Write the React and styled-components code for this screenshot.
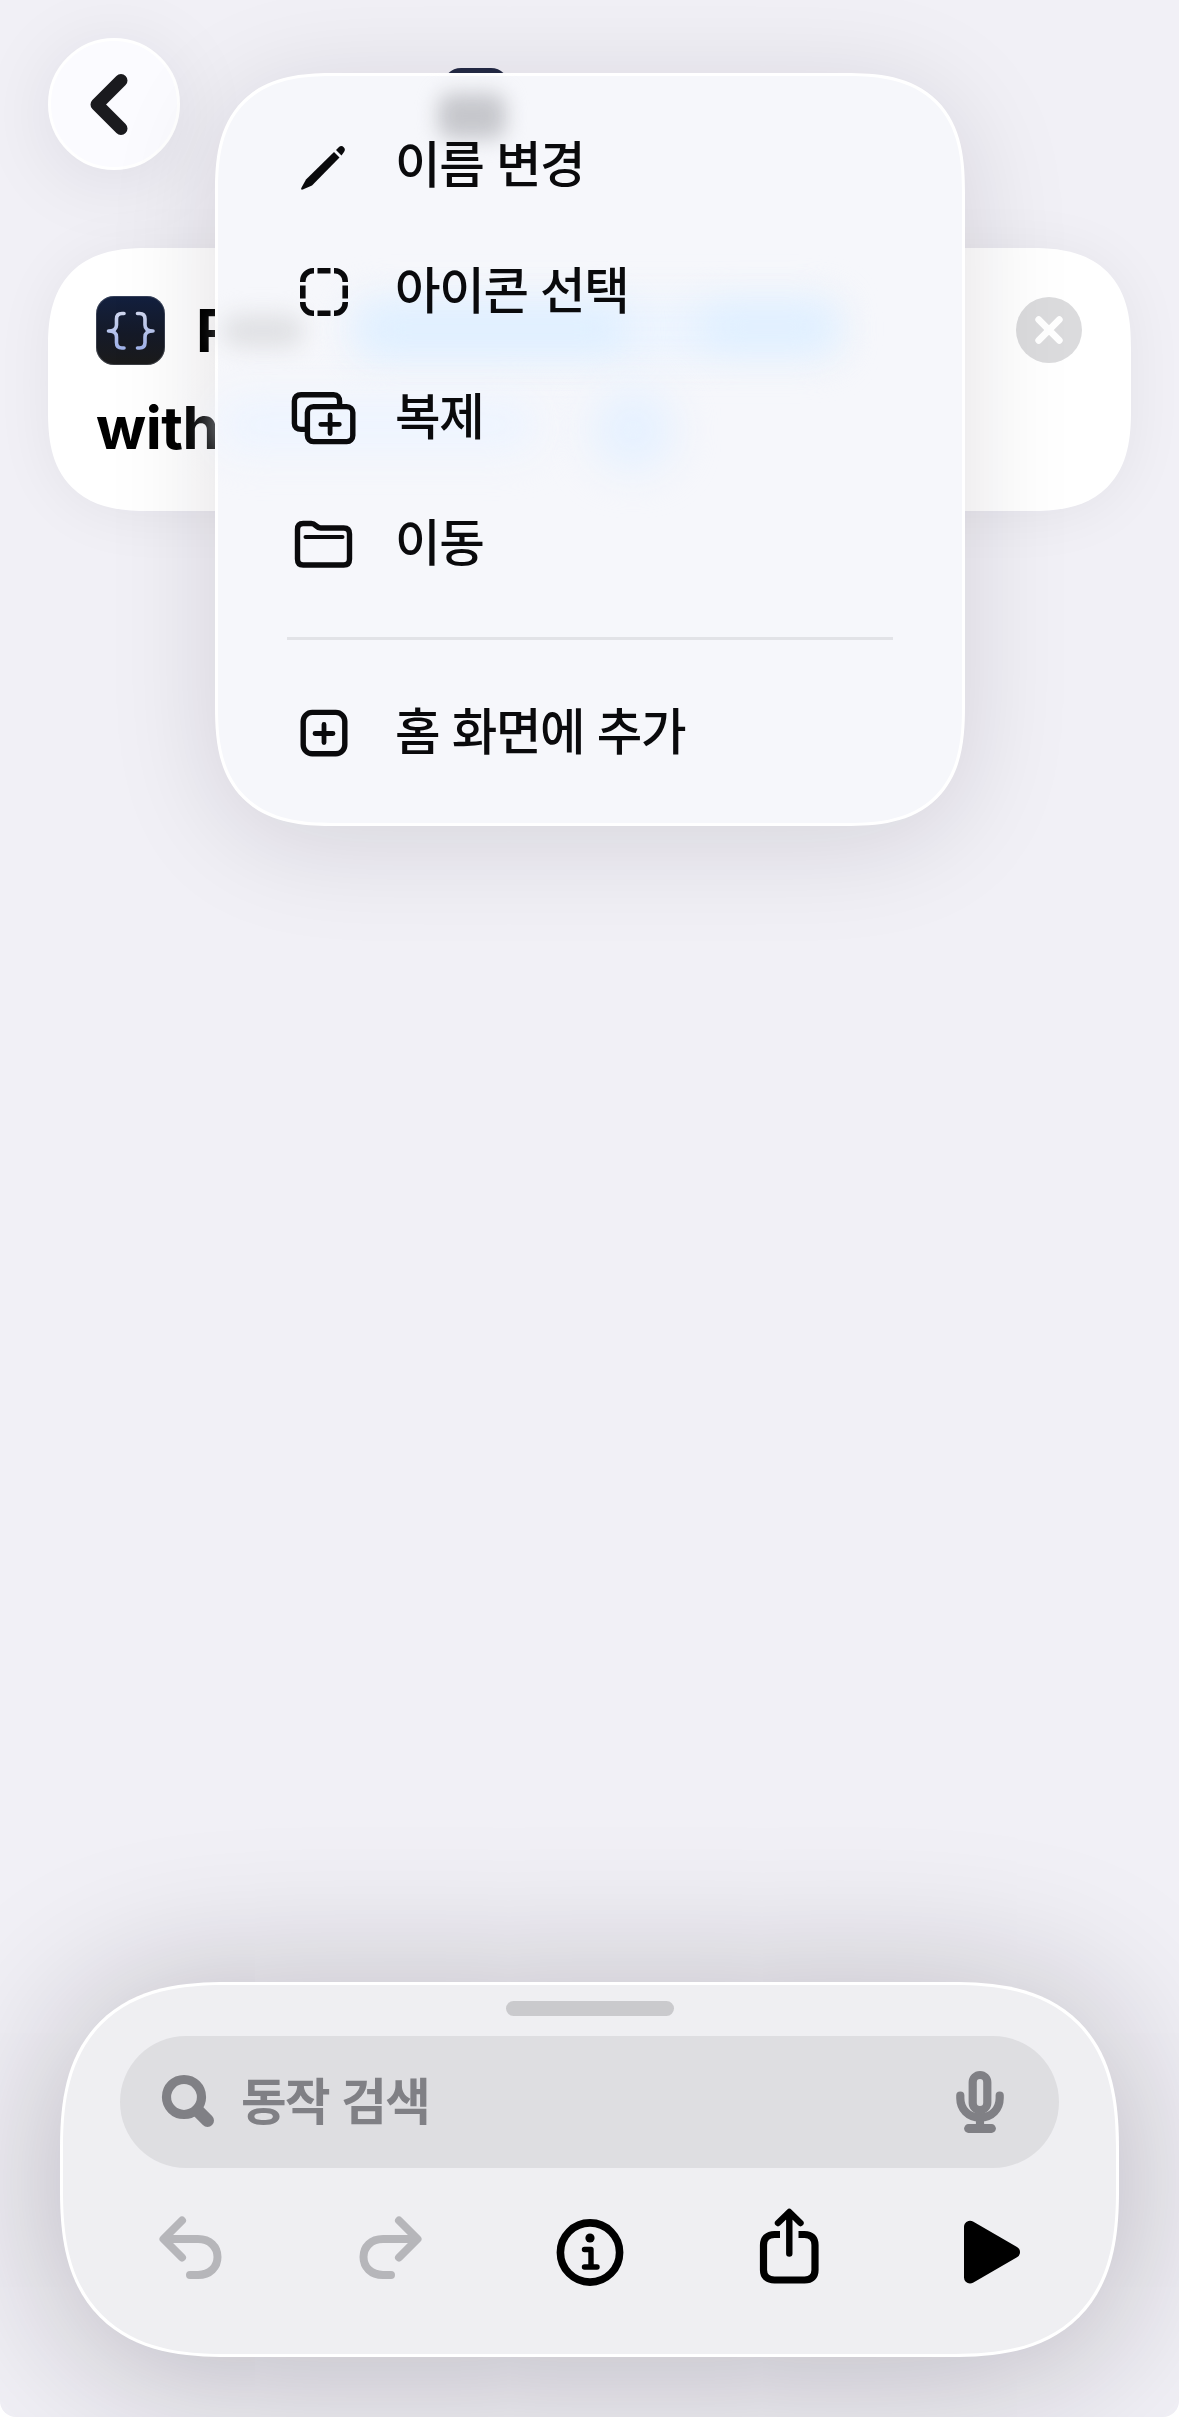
import React from "react";
import styled, { createGlobalStyle } from "styled-components";

const GlobalStyle = createGlobalStyle`
  * {
    box-sizing: border-box;
  }
  body {
    margin: 0;
    background: #ffffff;
    font-family: "Inter", "Noto Sans CJK KR", sans-serif;
    -webkit-font-smoothing: antialiased;
  }
  button {
    border: none;
    background: none;
    padding: 0;
    margin: 0;
    font: inherit;
    color: inherit;
  }
`;

const Screen = styled.div`
  position: relative;
  display: flex;
  flex-direction: column;
  width: 1179px;
  height: 2417px;
  overflow: hidden;
  border-radius: 0 0 16px 16px;
  background: #f1f0f6;
`;

const TopBar = styled.header`
  display: flex;
  align-items: center;
  height: 248px;
  padding: 38px 48px 78px;
`;

const BackButton = styled.button`
  display: flex;
  align-items: center;
  justify-content: center;
  width: 132px;
  height: 132px;
  border-radius: 50%;
  border: 3px solid #ffffff;
  background: #fbfbff;
  box-shadow: 0 10px 80px rgba(20, 15, 40, 0.09);
`;

const TitleIcon = styled.div`
  width: 66px;
  height: 66px;
  margin-left: 263px;
  margin-bottom: 6px;
  border-radius: 18px;
  background: #232a45;
`;

const ActionCard = styled.section`
  display: flex;
  flex-direction: column;
  gap: 1px;
  height: 263px;
  margin: 0 48px;
  padding: 34px 49px 0 48px;
  border-radius: 84px;
  background: #ffffff;
  box-shadow: 0 4px 60px rgba(20, 15, 40, 0.06);
  @supports (corner-shape: squircle) {
    border-radius: 100px;
    corner-shape: superellipse(1.35);
  }
`;

const CardLine = styled.div`
  display: flex;
  align-items: center;
  height: 96px;
  color: #000000;
  font-size: 59px;
  font-weight: 700;
  letter-spacing: -0.5px;
`;

const ScriptIcon = styled.div`
  display: flex;
  align-items: center;
  justify-content: center;
  width: 69px;
  height: 69px;
  margin-right: 31px;
  border-radius: 18px;
  background: linear-gradient(#13203f, #151a28 55%, #1b1b1b);
  box-shadow: inset 0 0 0 1px rgba(120, 125, 140, 0.35);
`;

const ClearButton = styled.button`
  display: flex;
  align-items: center;
  justify-content: center;
  width: 66px;
  height: 66px;
  margin-left: auto;
  border-radius: 50%;
  background: #dbdbdd;
`;

const Menu = styled.nav`
  position: absolute;
  top: 73px;
  left: 215px;
  width: 750px;
  height: 753px;
  padding: 27px 0;
  border: 3px solid #ffffff;
  border-radius: 98px;
  background: #f6f7fb;
  box-shadow: 0 16px 110px rgba(20, 15, 30, 0.13);
  color: #0a0a0c;
  @supports (corner-shape: squircle) {
    border-radius: 120px;
    corner-shape: superellipse(1.4);
  }
`;

const Haze = styled.div`
  position: absolute;
  top: ${props => props.top}px;
  left: ${props => props.left}px;
  width: ${props => props.width}px;
  height: ${props => props.height}px;
  border-radius: ${props => props.round || 20}px;
  background: ${props => props.tint};
  filter: blur(${props => props.blur || 14}px);
`;

const MenuItem = styled.button`
  position: relative;
  display: flex;
  align-items: center;
  width: 100%;
  height: 126px;
  padding-left: 70px;
  font-size: 49.5px;
  font-weight: 500;
  letter-spacing: -1.3px;
  word-spacing: 0.5px;
  white-space: nowrap;
`;

const MenuIcon = styled.span`
  display: flex;
  width: 72px;
  height: 72px;
  margin-right: 35px;
`;

const MenuLabel = styled.span`
  padding-bottom: 9px;
`;

const Divider = styled.hr`
  width: 606px;
  height: 3px;
  margin: 30px 69px;
  border: none;
  background: #e2e3e7;
`;

const Dock = styled.footer`
  display: flex;
  flex-direction: column;
  align-items: center;
  width: 1059px;
  height: 375px;
  margin: auto 60px 60px;
  padding-top: 16px;
  border: 3px solid #ffffff;
  border-radius: 140px;
  background: #efeff2;
  box-shadow: 0 12px 160px rgba(20, 15, 25, 0.28);
  @supports (corner-shape: squircle) {
    border-radius: 168px;
    corner-shape: superellipse(1.36);
  }
`;

const Grabber = styled.div`
  width: 168px;
  height: 15px;
  border-radius: 8px;
  background: #cacacd;
`;

const SearchField = styled.div`
  display: flex;
  align-items: center;
  width: 939px;
  height: 132px;
  margin-top: 20px;
  padding: 0 47px 0 36px;
  border-radius: 66px;
  background: #dedee1;
  color: #808085;
`;

const Placeholder = styled.span`
  flex: 1;
  margin-left: 17px;
  padding-bottom: 7px;
  font-size: 49.5px;
  font-weight: 700;
  letter-spacing: -1.5px;
  word-spacing: 2px;
`;

const Toolbar = styled.div`
  display: flex;
  justify-content: space-between;
  width: 939px;
  margin-top: 36px;
  padding: 0 19px 0 22px;
`;

const ToolButton = styled.button`
  display: flex;
  width: 100px;
  height: 96px;
  color: ${props => (props.disabled ? "#b6b6ba" : "#000000")};
`;

const Glyph = ({ size, height, stroke = 0, children }) => (
  <svg
    width={size}
    height={height || size}
    viewBox={`0 0 ${size} ${height || size}`}
    fill="none"
    stroke="currentColor"
    strokeWidth={stroke}
    strokeLinecap="round"
    strokeLinejoin="round"
  >
    {children}
  </svg>
);

const ChevronGlyph = () => (
  <Glyph size={126} stroke={13}>
    <path d="M70 39.500L46 63.500L70 87.500" stroke="#1a1a1e" />
  </Glyph>
);

const BracesGlyph = () => (
  <Glyph size={69} stroke={3.6}>
    <defs>
      <linearGradient id="braces" x1="0" y1="16" x2="0" y2="54" gradientUnits="userSpaceOnUse">
        <stop offset="0" stopColor="#cfd6ee" />
        <stop offset="1" stopColor="#9fb2ea" />
      </linearGradient>
    </defs>
    <path
      d="M28 17.5H26C22 17.5 20.500 19.500 20.500 23V29C20.500 33 18 35 12.500 35C18 35 20.500 37 20.500 41V46.500C20.500 50 22 52 26 52H28"
      stroke="url(#braces)"
    />
    <path
      d="M41.500 17.500H43.500C47.500 17.500 49 19.500 49 23V29C49 33 51.500 35 57 35C51.500 35 49 37 49 41V46.500C49 50 47.500 52 43.500 52H41.500"
      stroke="url(#braces)"
    />
  </Glyph>
);

const CloseGlyph = () => (
  <Glyph size={66} stroke={6.8}>
    <path d="M22.700 22.700L43.300 43.300M43.300 22.700L22.700 43.300" stroke="#ffffff" />
  </Glyph>
);

// Menu glyphs sit on a 72px canvas
const PencilGlyph = () => (
  <Glyph size={72}>
    <path
      d="M46 22L51.500 27.500L24 55.500L14.800 59.500C13.500 60 12.800 59.300 13.300 58L18 49.500Z"
      fill="currentColor"
    />
    <path
      d="M48 20L51 17C52.500 15.600 54.500 15.800 55.700 17.200C57.100 18.500 57.300 20.500 56 21.900L53.500 25.500Z"
      fill="currentColor"
    />
  </Glyph>
);

const DashedSquareGlyph = () => (
  <Glyph size={72} stroke={5.6}>
    <g strokeLinecap="butt">
      <path d="M14.800 26V25C14.800 19.500 19.500 14.800 25 14.800H26M46 14.800H47C52.500 14.800 57.200 19.500 57.200 25V26M57.200 46V47C57.200 52.500 52.500 57.200 47 57.200H46M26 57.200H25C19.500 57.200 14.800 52.500 14.800 47V46" />
      <path d="M29.500 14.800H42.500M57.200 29.500V42.500M42.500 57.200H29.500M14.800 42.500V29.500" />
    </g>
  </Glyph>
);

const DuplicateGlyph = () => (
  <Glyph size={72} stroke={5.4}>
    <rect x="19.400" y="24.600" width="45.400" height="35" rx="6" />
    <path
      d="M51.600 22V19.500C51.600 15 49.600 12.700 45.600 12.700H13.100C9.100 12.700 6.400 15 6.400 19V41.500C6.400 45.500 9.100 47.400 13.100 47.400H17.600"
      strokeLinecap="butt"
    />
    <path d="M42.100 33V51.500M32.800 42.300H51.300" strokeWidth="4.800" />
  </Glyph>
);

const FolderGlyph = () => (
  <Glyph size={72} stroke={5.4}>
    <path d="M9.500 21.500C9.500 17.500 11.700 15.500 15.200 15.500H23.200C28.200 15.500 27.700 20 32.700 20H55.700C59.700 20 61.500 22 61.500 26V51C61.500 55 59.700 57 55.700 57H15.200C11.700 57 9.500 55 9.500 51Z" />
    <path d="M17.500 29H54.500" strokeWidth="4" />
  </Glyph>
);

const AddSquareGlyph = () => (
  <Glyph size={72} stroke={5.4}>
    <rect x="15.200" y="15.400" width="41.600" height="41.400" rx="9" />
    <path d="M36 27.500V45.500M27 36.500H45" strokeWidth="4.800" />
  </Glyph>
);

const SearchGlyph = () => (
  <Glyph size={68}>
    <circle cx="28" cy="29" r="17.500" stroke="currentColor" strokeWidth="9.200" />
    <path d="M42.500 43.500L51.500 52.500" stroke="currentColor" strokeWidth="13" />
  </Glyph>
);

const MicGlyph = () => (
  <Glyph size={64} height={72} stroke={8.2}>
    <rect x="24.700" y="9" width="14.600" height="35" rx="7.300" />
    <path d="M12.300 29.500V32C12.300 43 20 51.500 32 51.500C44 51.500 51.700 43 51.700 32V29.500" />
    <path d="M32 52V62" />
    <path d="M20.500 62.500H43.500" strokeWidth="8.800" />
  </Glyph>
);

const UndoGlyph = () => (
  <Glyph size={100} height={96} stroke={8}>
    <path d="M40 16.500L21.500 35L40 53.500M22 35H56C68 35 75.500 43 75.500 53C75.500 63 68 71 56 71H48" />
  </Glyph>
);

const RedoGlyph = () => (
  <Glyph size={100} height={96} stroke={8}>
    <path d="M57 16.500L75.500 35L57 53.500M75 35H41C29 35 21.500 43 21.500 53C21.500 63 29 71 41 71H49" />
  </Glyph>
);

const InfoGlyph = () => (
  <Glyph size={100} height={96}>
    <circle cx="49" cy="48.500" r="29.600" stroke="currentColor" strokeWidth="7.600" />
    <circle cx="49" cy="34" r="4.600" fill="currentColor" />
    <path d="M43.500 45.500H50V63M43.500 63H56" stroke="currentColor" strokeWidth="5.400" />
  </Glyph>
);

const ShareGlyph = () => (
  <Glyph size={100} height={96} stroke={7.2}>
    <path
      d="M39 30.500H33.500C26.500 30.500 22.500 34.500 22.500 41V66C22.500 72.500 26.500 76 33.500 76H63.500C70.500 76 74 72.500 74 66V41C74 34.500 70.500 30.500 63.500 30.500H57.500"
      strokeLinecap="butt"
    />
    <path d="M48.300 49.500V8.500M37 19L48.300 8L59.500 19" strokeWidth="6.400" />
  </Glyph>
);

const PlayGlyph = () => (
  <Glyph size={100} height={96} stroke={12}>
    <path d="M30 22.800V73.500L74 48.100Z" fill="currentColor" />
  </Glyph>
);

// Content behind the menu, diffused through its glass
const hazes = [
  { top: 17, left: 220, width: 68, height: 46, tint: "#c6c7cc", blur: 10, round: 14 },
  { top: 238, left: 4, width: 82, height: 34, tint: "#e0e1e4", blur: 11 },
  { top: 222, left: 132, width: 490, height: 62, tint: "#ecf4fe", blur: 18 },
  { top: 228, left: 140, width: 270, height: 50, tint: "#dfefff", blur: 18 },
  { top: 228, left: 480, width: 140, height: 46, tint: "#dfefff", blur: 18 },
  { top: 322, left: 0, width: 320, height: 54, tint: "#edf4ff", blur: 20 },
  { top: 312, left: 372, width: 86, height: 84, tint: "#e6f1ff", blur: 20, round: 43 }
];

const items = [
  { label: "이름 변경", icon: <PencilGlyph /> },
  { label: "아이콘 선택", icon: <DashedSquareGlyph /> },
  { label: "복제", icon: <DuplicateGlyph /> },
  { label: "이동", icon: <FolderGlyph /> }
];

function App() {
  return (
    <Screen>
      <GlobalStyle />
      <TopBar>
        <BackButton>
          <ChevronGlyph />
        </BackButton>
        <TitleIcon />
      </TopBar>
      <ActionCard>
        <CardLine>
          <ScriptIcon>
            <BracesGlyph />
          </ScriptIcon>
          R
          <ClearButton>
            <CloseGlyph />
          </ClearButton>
        </CardLine>
        <CardLine>with</CardLine>
      </ActionCard>
      <Menu>
        {hazes.map((haze, key) => (
          <Haze key={key} {...haze} />
        ))}
        {items.map((item, key) => (
          <MenuItem key={key}>
            <MenuIcon>{item.icon}</MenuIcon>
            <MenuLabel>{item.label}</MenuLabel>
          </MenuItem>
        ))}
        <Divider />
        <MenuItem>
          <MenuIcon>
            <AddSquareGlyph />
          </MenuIcon>
          <MenuLabel>홈 화면에 추가</MenuLabel>
        </MenuItem>
      </Menu>
      <Dock>
        <Grabber />
        <SearchField>
          <SearchGlyph />
          <Placeholder>동작 검색</Placeholder>
          <MicGlyph />
        </SearchField>
        <Toolbar>
          <ToolButton disabled>
            <UndoGlyph />
          </ToolButton>
          <ToolButton disabled>
            <RedoGlyph />
          </ToolButton>
          <ToolButton>
            <InfoGlyph />
          </ToolButton>
          <ToolButton>
            <ShareGlyph />
          </ToolButton>
          <ToolButton>
            <PlayGlyph />
          </ToolButton>
        </Toolbar>
      </Dock>
    </Screen>
  );
}

export default App;
